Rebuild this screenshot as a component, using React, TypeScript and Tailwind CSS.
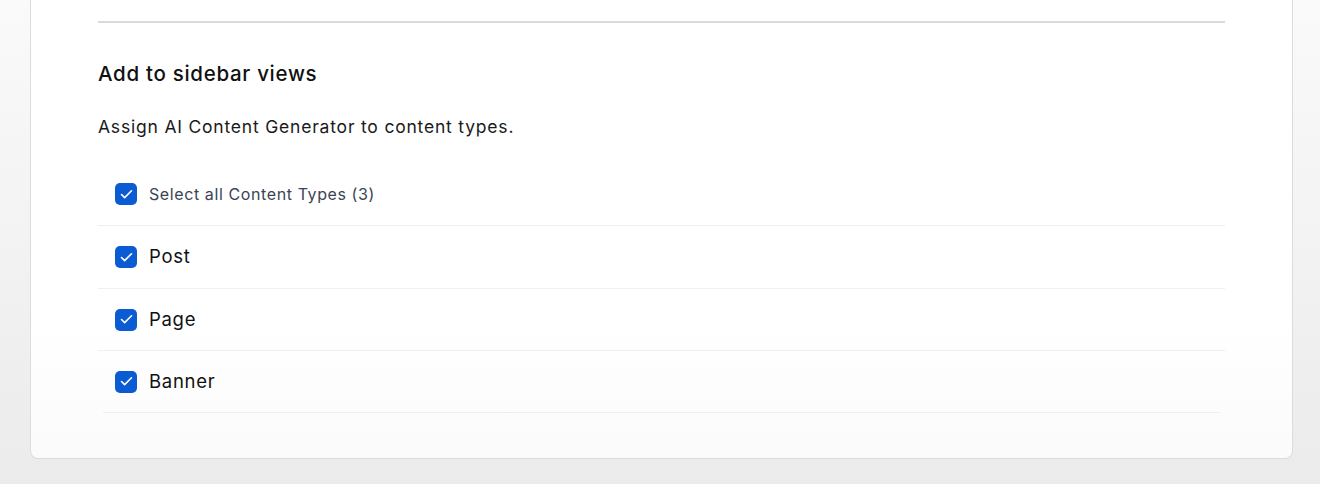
import { Check } from 'lucide-react';

const types = ['Post', 'Page', 'Banner'];

const Box = () => (
    <span className="flex h-[22px] w-[22px] shrink-0 items-center justify-center rounded-[5px] bg-[#0b5bd3]">
        <Check className="h-[15px] w-[15px] text-white" strokeWidth={2.6} />
    </span>
);

export default function App() {
    return (
        <div
            className="h-[484px] overflow-hidden bg-gradient-to-b from-[#fafafa] to-[#ebebeb] text-[#111]"
            style={{ fontFamily: 'Inter, "Noto Sans", sans-serif' }}
        >
            <div className="ml-[30px] mr-[27px] h-[459px] rounded-b-[8px] border-x border-b border-[#dcdcdc] bg-gradient-to-b from-white from-70% to-[#fbfbfb] px-[67px] pt-[21px]">
                <div className="h-[2px] bg-[#dadada]" />
                <h2 className="mt-[37px] text-[20.5px] leading-[28px] font-medium tracking-[0.7px]">
                    Add to sidebar views
                </h2>
                <p className="mt-[27px] text-[17.5px] leading-[24px] tracking-[0.8px] text-[#1a1a1a]">
                    Assign AI Content Generator to content types.
                </p>
                <div className="mt-[24px]">
                    <label className="flex h-[63px] items-center gap-[12px] border-b border-[#efefef] pl-[17px]">
                        <Box />
                        <span className="text-[16px] tracking-[0.6px] text-[#3b4456]">Select all Content Types (3)</span>
                    </label>
                    {types.map((t, i) => (
                        <label
                            key={t}
                            className={
                                i === 0
                                    ? 'flex h-[63px] items-center gap-[12px] border-b border-[#efefef] pl-[17px]'
                                    : i === types.length - 1
                                      ? 'mx-[5px] flex h-[62px] items-center gap-[12px] border-b border-[#efefef] pl-[12px]'
                                      : 'flex h-[62px] items-center gap-[12px] border-b border-[#efefef] pl-[17px]'
                            }
                        >
                            <Box />
                            <span className="text-[18.5px] tracking-[0.7px]">{t}</span>
                        </label>
                    ))}
                </div>
            </div>
        </div>
    );
}
